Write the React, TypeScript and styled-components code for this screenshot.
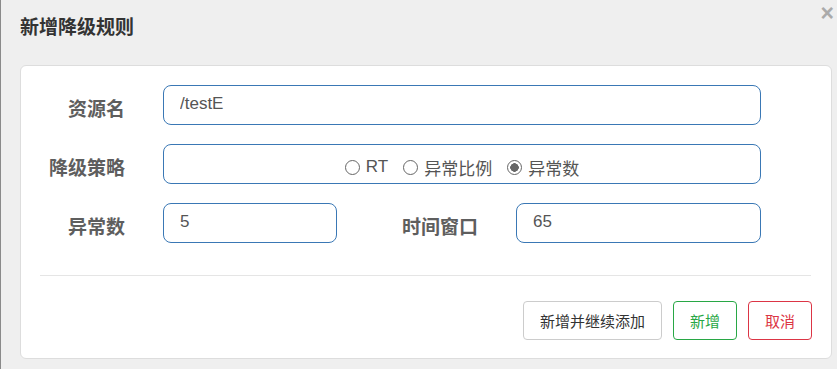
import styled, { createGlobalStyle } from 'styled-components';

const GlobalStyle = createGlobalStyle`
  html, body {
    margin: 0;
    padding: 0;
    background: #efefef;
  }
  body {
    font-family: "Liberation Sans", "Noto Sans CJK SC", sans-serif;
    color: #555;
  }
`;

type Strategy = 'rt' | 'ratio' | 'count';

const strategies: { key: Strategy; label: string }[] = [
  { key: 'rt', label: 'RT' },
  { key: 'ratio', label: '异常比例' },
  { key: 'count', label: '异常数' },
];

const App = () => {
  const current: Strategy = 'count';

  return (
    <>
      <GlobalStyle />
      <Dialog>
        <Header>
          <Title>新增降级规则</Title>
          <Close>×</Close>
        </Header>

        <Card>
          <Row>
            <Label>资源名</Label>
            <Input defaultValue="/testE" />
          </Row>

          <Row>
            <Label>降级策略</Label>
            <RadioBox>
              {strategies.map(s => (
                <RadioItem key={s.key}>
                  <Circle $checked={s.key === current} />
                  {s.label}
                </RadioItem>
              ))}
            </RadioBox>
          </Row>

          <Row>
            <Label>异常数</Label>
            <Input $width={174} defaultValue="5" />
            <Label $width={141}>时间窗口</Label>
            <Input defaultValue="65" />
          </Row>

          <Divider />

          <Footer>
            <Button>新增并继续添加</Button>
            <Button $tone="success">新增</Button>
            <Button $tone="danger">取消</Button>
          </Footer>
        </Card>
      </Dialog>
    </>
  );
};

const Dialog = styled.div`
  box-sizing: border-box;
  width: 837px;
  height: 369px;
  padding: 0 6px 0 19px;
  border-left: 1px solid #8a8a8a;
`;

const Header = styled.div`
  display: flex;
  align-items: center;
  justify-content: space-between;
  height: 65px;
  position: relative;
`;

const Title = styled.h4`
  margin: 0 0 15px 0;
  font-size: 19px;
  font-weight: bold;
  color: #333;
`;

const Close = styled.span`
  position: absolute;
  top: 0;
  right: -3px;
  line-height: 26px;
  font-size: 23px;
  font-weight: bold;
  color: #aaa;
  font-family: "Liberation Sans", sans-serif;
`;

const Card = styled.div`
  box-sizing: border-box;
  width: 812px;
  background: #fff;
  border: 1px solid #ddd;
  border-radius: 6px;
  padding: 19px 70px 18px 0;
`;

const Row = styled.div`
  display: flex;
  align-items: center;
  height: 40px;
  margin-bottom: 19px;

  &:nth-of-type(3) {
    margin-bottom: 0;
  }
`;

const Label = styled.label<{ $width?: number }>`
  flex: 0 0 ${p => p.$width ?? 104}px;
  text-align: right;
  padding-right: 38px;
  font-size: 19px;
  font-weight: bold;
  color: #5e5e5e;
  padding-top: 4px;
`;

const Input = styled.input<{ $width?: number }>`
  box-sizing: border-box;
  height: 40px;
  ${p => (p.$width ? `flex: 0 0 ${p.$width}px;` : 'flex: 1;')}
  min-width: 0;
  border: 1px solid #3a78b5;
  border-radius: 8px;
  padding: 0 16px 3px 16px;
  font-family: "Liberation Sans", "Noto Sans CJK SC", sans-serif;
  font-size: 17px;
  color: #555;
  outline: none;
`;

const RadioBox = styled.div`
  box-sizing: border-box;
  flex: 1;
  height: 40px;
  border: 1px solid #3a78b5;
  border-radius: 8px;
  display: flex;
  align-items: center;
  justify-content: center;
  gap: 15px;
  padding-top: 6px;
`;

const RadioItem = styled.span`
  display: inline-flex;
  align-items: center;
  gap: 6px;
  font-size: 17px;
  color: #555;
`;

const Circle = styled.span<{ $checked?: boolean }>`
  box-sizing: border-box;
  width: 15px;
  height: 15px;
  border-radius: 50%;
  border: 1px solid #666;
  background: ${p => (p.$checked ? 'radial-gradient(circle, #666 0 4px, #fff 4.5px)' : '#fff')};
`;

const Divider = styled.hr`
  margin: 32px 0 25px 19px;
  width: 771px;
  border: 0;
  border-top: 1px solid #e5e5e5;
`;

const tones = {
  default: { color: '#333', border: '#ccc' },
  success: { color: '#28a745', border: '#28a745' },
  danger: { color: '#dc3545', border: '#dc3545' },
};

const Footer = styled.div`
  display: flex;
  justify-content: flex-end;
  gap: 11px;
  margin-right: -51px;
`;

const Button = styled.button<{ $tone?: keyof typeof tones }>`
  height: 39px;
  padding: 0 16px;
  background: #fff;
  border-radius: 4px;
  font-family: "Liberation Sans", "Noto Sans CJK SC", sans-serif;
  font-size: 15px;
  color: ${p => tones[p.$tone ?? 'default'].color};
  border: 1px solid ${p => tones[p.$tone ?? 'default'].border};
`;

export default App;
